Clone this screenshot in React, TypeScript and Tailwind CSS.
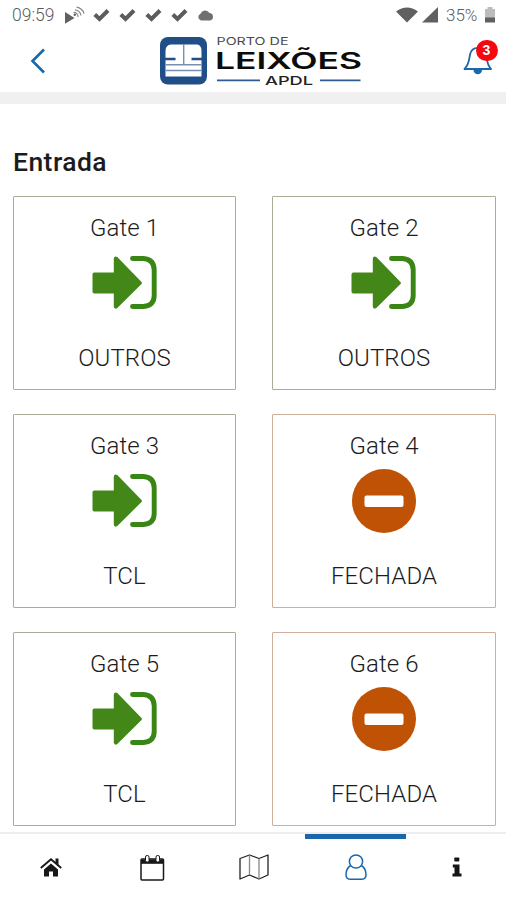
import type { ReactNode } from "react";

type Gate = {
  name: string;
  label: string;
  open: boolean;
};

const gates: Gate[] = [
  { name: "Gate 1", label: "OUTROS", open: true },
  { name: "Gate 2", label: "OUTROS", open: true },
  { name: "Gate 3", label: "TCL", open: true },
  { name: "Gate 4", label: "FECHADA", open: false },
  { name: "Gate 5", label: "TCL", open: true },
  { name: "Gate 6", label: "FECHADA", open: false },
];

export default function App() {
  return (
    <div className="flex h-[900px] w-[506px] flex-col overflow-hidden bg-white font-['Roboto',sans-serif] text-[#1c1c1c]">
      <StatusBar />
      <Header />
      <div className="h-3 shrink-0 bg-[#f0f0f0]" />
      <main className="h-[728px] shrink-0 pr-[10px] pl-[13px]">
        <h1 className="pt-[42px] text-[26.5px] leading-8 font-medium tracking-[0.45px]">Entrada</h1>
        <div className="mt-[18px] grid grid-cols-[223px_224px] gap-x-9 gap-y-6">
          {gates.map((gate) => (
            <GateCard key={gate.name} gate={gate} />
          ))}
        </div>
      </main>
      <TabBar />
    </div>
  );
}

function StatusBar() {
  return (
    <div className="flex h-[30px] shrink-0 items-center pr-[11px] pl-[12px] text-[17.5px] leading-[30px] font-light text-[#5c5c5c]">
      <span className="w-[53px]">09:59</span>
      <svg width="20" height="18" viewBox="0 0 20 18" fill="#606060">
        <path d="M0 6 9.500 12 0 17.8Z" />
        <g fill="none" stroke="#888" strokeWidth="1.2">
          <path d="M8.500 6.500a4 4 0 0 1 4.500 4.500M10 3.800a7 7 0 0 1 6 5.700M11.500 1.200a9 9 0 0 1 7.500 6.500" />
        </g>
        <circle cx="9.800" cy="8.800" r="1.200" />
      </svg>
      <div className="ml-[8px] flex gap-[9px]">
        {[0, 1, 2, 3].map((i) => (
          <svg key={i} width="17" height="14" viewBox="0 0 17 14">
            <path d="M1.800 6.500 6.500 11 15 2.500" fill="none" stroke="#5c5c5c" strokeWidth="4" />
          </svg>
        ))}
      </div>
      <svg className="ml-[9px]" width="17" height="12" viewBox="0 0 17 12">
        <path d="M4 11.500a3.600 3.600 0 0 1-.5-6.800A5 5 0 0 1 12.500 4a3.800 3.800 0 0 1 .5 7.500Z" fill="#707070" />
      </svg>
      <svg className="ml-auto" width="22" height="16" viewBox="0 0 22 16">
        <path d="M0 4.500Q11-3.500 22 4.500L11 15.500Z" fill="#606060" />
      </svg>
      <svg className="ml-[4px]" width="16" height="16" viewBox="0 0 16 16">
        <path d="M16 0V15.500H0Z" fill="#606060" />
      </svg>
      <span className="ml-[8px] w-[35px] text-[17px] whitespace-nowrap">35%</span>
      <svg className="ml-[4px]" width="10" height="16" viewBox="0 0 10 16">
        <path d="M2.500 0h5v2h2.500v9H0V2h2.500Z" fill="#bcbcbc" />
        <path d="M0 10.500h10v5H0Z" fill="#606060" />
      </svg>
    </div>
  );
}

function Header() {
  return (
    <header className="flex h-[62px] shrink-0 items-start">
      <svg className="mt-[18px] ml-[30px]" width="16" height="26" viewBox="0 0 16 26">
        <path d="M14 1.500 2.500 13 14 24.500" fill="none" stroke="#1b67ab" strokeWidth="2.600" />
      </svg>
      <Logo />
      <div className="relative mt-[8px] ml-[98px] h-[38px] w-[38px]">
        <svg width="38" height="38" viewBox="0 0 38 38">
          <path
            d="M3.500 31C8 27 8 22 9 16.500C10 12 12.500 9.800 17 9.800S24 12 25 16.500C26 22 26 27 30 31Z"
            fill="none"
            stroke="#1b67ab"
            strokeWidth="1.800"
            strokeLinejoin="round"
          />
          <path d="M12.500 32h8.500a4.200 4.200 0 0 1-8.500 0Z" fill="#1b67ab" />
        </svg>
        <span className="absolute top-[1.5px] left-[14.5px] flex h-[21px] w-[22px] items-center justify-center rounded-full bg-[#f6080f] font-['Liberation_Sans',sans-serif] text-[14px] leading-none font-bold text-white">
          3
        </span>
      </div>
    </header>
  );
}

function Logo() {
  return (
    <svg className="mt-[6px] ml-[113px]" width="204" height="50" viewBox="0 0 204 50">
      <rect x="1" y="1" width="47" height="47.5" rx="8" fill="#204f88" />
      <path d="M12 8.500H38Q42.500 9 42.500 15V40.500H6.500V15Q6.500 9 12 8.500Z" fill="#fff" />
      <path d="M6 23H16.500M32.500 23H43" stroke="#204f88" strokeWidth="2.600" />
      <path d="M24.700 8V28.500M6.500 28.700H42.500M6.500 34.500H42.500" stroke="#7890b0" strokeWidth="1.400" />
      <text
        x="57.500"
        y="8.800"
        textLength="72"
        lengthAdjust="spacingAndGlyphs"
        fontFamily="Inter, sans-serif"
        fontSize="10.500"
        fill="#4a4a4a"
      >
        PORTO DE
      </text>
      <text
        x="56"
        y="33"
        textLength="147"
        lengthAdjust="spacingAndGlyphs"
        fontFamily="Inter, sans-serif"
        fontWeight="600"
        fontSize="23"
        fill="#0c0c0c"
      >
        LEIXÕES
      </text>
      <text
        x="106"
        y="48.500"
        textLength="48"
        lengthAdjust="spacingAndGlyphs"
        fontFamily="Inter, sans-serif"
        fontWeight="500"
        fontSize="12"
        fill="#222"
      >
        APDL
      </text>
      <path d="M58 44.300H101M161 44.300H201.500" stroke="#305b90" strokeWidth="1.800" />
    </svg>
  );
}

function GateCard({ gate }: { gate: Gate }) {
  return (
    <div
      className={`flex h-[194px] flex-col items-center rounded-[1px] border pt-[15px] text-2xl leading-8 font-[350] tracking-[0.1px] ${
        gate.open ? "border-[#a9ad98]" : "border-[#cfae9b]"
      }`}
    >
      <span>{gate.name}</span>
      <div className="mt-[7px] h-16">{gate.open ? <EnterIcon /> : <ClosedIcon />}</div>
      <span className="mt-[27px]">{gate.label}</span>
    </div>
  );
}

function EnterIcon() {
  return (
    <svg width="66" height="64" viewBox="0 0 66 64">
      <path
        d="M2.300 21.500H21.800V7.500Q22.300 4.300 25.300 6L49.500 31Q50.500 32 49.500 33L25.300 57Q22.300 58.800 21.800 55.500V42.500H2.300Q.5 42.500 .5 40.500V23.500Q.5 21.500 2.300 21.500Z"
        fill="#438719"
      />
      <path
        d="M40.500 7.500H51.500Q62.200 8.500 62.200 19V44.500Q62.200 54.500 51.500 55.500H40.500"
        fill="none"
        stroke="#398516"
        strokeWidth="4.900"
        strokeLinecap="round"
      />
    </svg>
  );
}

function ClosedIcon() {
  return (
    <svg width="64" height="64" viewBox="0 0 64 64">
      <circle cx="32" cy="32" r="32" fill="#c05205" />
      <rect x="12.500" y="26.500" width="39" height="11.500" rx="2" fill="#fff" />
    </svg>
  );
}

function TabBar() {
  return (
    <nav className="grid h-[68px] w-[508px] shrink-0 grid-cols-5 border-t-2 border-[#eeeeee] bg-white">
      <Tab>
        <svg width="22" height="22" viewBox="0 0 22 22" fill="#181818">
          <path d="M4 13.500 11 7.500 18 13.500V20.500H13V15.500H9V20.500H4Z" />
          <path d="M.8 12 11 3.300 21.200 12" fill="none" stroke="#181818" strokeWidth="1.900" />
          <path d="M15.500 2.500H18.500V9L15.500 6.500Z" />
        </svg>
      </Tab>
      <Tab>
        <svg width="26" height="27" viewBox="0 0 26 27">
          <rect x="2" y="5" width="22.500" height="21" rx="1" fill="none" stroke="#181818" strokeWidth="1.500" />
          <path d="M2 5.500H24.500V9.800H2Z" fill="#181818" />
          <rect x="6.500" y="1.500" width="3.500" height="6.500" rx="1.500" fill="#fff" stroke="#181818" />
          <rect x="17" y="1.500" width="3.500" height="6.500" rx="1.500" fill="#fff" stroke="#181818" />
        </svg>
      </Tab>
      <Tab>
        <svg width="30" height="28" viewBox="0 0 30 28" fill="none" stroke="#222" strokeWidth="1.300" strokeLinejoin="round">
          <path d="M1 5.500 10.500 2 20 5.500 29 2V22L20 26 10.500 22 1 26Z" />
          <path d="M10.500 2V22M20 5.500V26" stroke="#888" />
        </svg>
      </Tab>
      <Tab active>
        <svg width="22" height="26" viewBox="0 0 22 26" fill="none" stroke="#1b67ab" strokeWidth="1.500">
          <circle cx="11" cy="7.500" r="6.600" />
          <path d="M5.700 11.500Q1 14.500 1 20.500Q1 25.200 5 25.200H17Q21 25.200 21 20.500Q21 14.500 16.300 11.500" />
        </svg>
      </Tab>
      <Tab>
        <svg width="10" height="20" viewBox="0 0 10 20" fill="#151515">
          <rect x="2.300" y="0.500" width="5" height="4" rx="0.800" />
          <path d="M.8 7.500H7.500V16.500H9.500V19.500H.5V16.500H2.500V10.500H.8Z" />
        </svg>
      </Tab>
    </nav>
  );
}

function Tab({ active = false, children }: { active?: boolean; children: ReactNode }) {
  return (
    <button type="button" className="flex flex-col">
      <span className={`h-[5px] w-full ${active ? "bg-[#1b67ab]" : ""}`} />
      <span className="flex h-[56px] w-full items-center justify-center">{children}</span>
    </button>
  );
}
